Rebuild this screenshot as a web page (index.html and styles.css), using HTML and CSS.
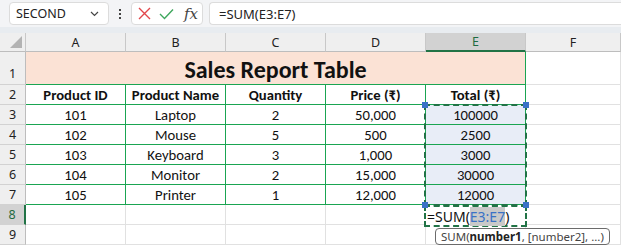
FILE: index.html
```html
<!DOCTYPE html>
<html lang="en">
<head>
    <meta charset="UTF-8">
    <title>Sales Report Table</title>
    <link rel="stylesheet" href="styles.css">
</head>
<body>

<div class="toolbar">
    <div class="name-box">
        <span>SECOND</span>
        <svg width="9" height="6" viewBox="0 0 9 6"><path d="M1 1 L4.5 4.5 L8 1" fill="none" stroke="#444" stroke-width="1.2"/></svg>
    </div>
    <div class="toolbar-dots"><i></i><i></i><i></i></div>
    <div class="fx-box">
        <svg width="13" height="13" viewBox="0 0 13 13"><path d="M1 1 L12 12 M12 1 L1 12" stroke="#e2474b" stroke-width="1.4" fill="none"/></svg>
        <svg width="15" height="12" viewBox="0 0 15 12"><path d="M1 6 L5.5 10.5 L14 1.5" stroke="#3ea75d" stroke-width="1.4" fill="none"/></svg>
        <span class="fx">fx</span>
    </div>
    <div class="formula-bar">=SUM(E3:E7)</div>
</div>
<div class="band"></div>

<div class="sheet">
    <!-- column headers -->
    <div class="corner"><span class="corner-tri"></span></div>
    <div class="col-head">A</div>
    <div class="col-head">B</div>
    <div class="col-head">C</div>
    <div class="col-head">D</div>
    <div class="col-head col-active">E</div>
    <div class="col-head">F</div>

    <!-- row 1 -->
    <div class="row-head row-tall">1</div>
    <div class="cell title">Sales Report Table</div>
    <div class="cell"></div>

    <!-- row 2 -->
    <div class="row-head">2</div>
    <div class="cell tbl th">Product ID</div>
    <div class="cell tbl th">Product Name</div>
    <div class="cell tbl th">Quantity</div>
    <div class="cell tbl th">Price (₹)</div>
    <div class="cell tbl th">Total (₹)</div>
    <div class="cell"></div>

    <!-- rows 3-7 -->
    <div class="row-head">3</div>
    <div class="cell tbl">101</div>
    <div class="cell tbl">Laptop</div>
    <div class="cell tbl">2</div>
    <div class="cell tbl">50,000</div>
    <div class="cell tbl sel range-start">100000
        <div class="range-box">
            <span class="handle h-tl"></span>
            <span class="handle h-tr"></span>
            <span class="handle h-bl"></span>
            <span class="handle h-br"></span>
        </div>
    </div>
    <div class="cell"></div>

    <div class="row-head">4</div>
    <div class="cell tbl">102</div>
    <div class="cell tbl">Mouse</div>
    <div class="cell tbl">5</div>
    <div class="cell tbl">500</div>
    <div class="cell tbl sel">2500</div>
    <div class="cell"></div>

    <div class="row-head">5</div>
    <div class="cell tbl">103</div>
    <div class="cell tbl">Keyboard</div>
    <div class="cell tbl">3</div>
    <div class="cell tbl">1,000</div>
    <div class="cell tbl sel">3000</div>
    <div class="cell"></div>

    <div class="row-head">6</div>
    <div class="cell tbl">104</div>
    <div class="cell tbl">Monitor</div>
    <div class="cell tbl">2</div>
    <div class="cell tbl">15,000</div>
    <div class="cell tbl sel">30000</div>
    <div class="cell"></div>

    <div class="row-head">7</div>
    <div class="cell tbl">105</div>
    <div class="cell tbl">Printer</div>
    <div class="cell tbl">1</div>
    <div class="cell tbl">12,000</div>
    <div class="cell tbl sel">12000</div>
    <div class="cell"></div>

    <!-- row 8 -->
    <div class="row-head row-active">8</div>
    <div class="cell"></div>
    <div class="cell"></div>
    <div class="cell"></div>
    <div class="cell"></div>
    <div class="edit-cell">=SUM(<span class="ref">E3:E7</span>)
        <div class="tip">SUM(<b>number1</b>, [number2], ...)</div>
    </div>
    <div class="cell"></div>

    <!-- row 9 -->
    <div class="row-head">9</div>
    <div class="cell"></div>
    <div class="cell"></div>
    <div class="cell"></div>
    <div class="cell"></div>
    <div class="cell"></div>
    <div class="cell"></div>
</div>

</body>
</html>
```

FILE: styles.css
```css
body {
    margin: 0;
    background: #fff;
    font-family: "Noto Sans", "Open Sans", sans-serif;
    overflow: hidden;
}

/* formula bar */
.toolbar {
    height: 27px;
    background: #f3f4f6;
    display: flex;
    align-items: center;
    padding: 0 0 0 9px;
    box-sizing: border-box;
}

.name-box {
    width: 100px;
    height: 23px;
    box-sizing: border-box;
    background: #fff;
    border: 1px solid #dcdcdc;
    border-radius: 4px;
    display: flex;
    align-items: center;
    justify-content: space-between;
    padding: 0 9px 0 6px;
    font-size: 12.5px;
    color: #222;
}

.toolbar-dots {
    width: 22px;
    display: flex;
    flex-direction: column;
    align-items: center;
    gap: 2px;
}

.toolbar-dots i {
    width: 2px;
    height: 2px;
    background: #444;
}

.fx-box {
    width: 72px;
    height: 23px;
    box-sizing: border-box;
    background: #fff;
    border: 1px solid #dcdcdc;
    border-radius: 4px;
    display: flex;
    align-items: center;
    gap: 8px;
    padding: 0 0 0 6px;
}

.fx {
    font-family: "DejaVu Serif", "Liberation Serif", serif;
    font-style: italic;
    font-size: 15px;
    color: #444;
    margin-left: 2px;
}

.formula-bar {
    flex: 1;
    height: 23px;
    box-sizing: border-box;
    margin-left: 6px;
    background: #fff;
    border: 1px solid #dcdcdc;
    border-right: none;
    border-radius: 4px 0 0 4px;
    display: flex;
    align-items: center;
    padding-left: 9px;
    font-size: 13px;
    color: #222;
}

.band {
    height: 6px;
    background: #e8ecf0;
}

/* grid */
.sheet {
    display: grid;
    grid-template-columns: 26px repeat(5, 100px) 1fr;
    grid-template-rows: 19px 33px repeat(8, 20px);
    font-family: "Carlito", "Lato", sans-serif;
    font-size: 14.7px;
    color: #111;
}

.corner,
.col-head,
.row-head,
.cell {
    box-sizing: border-box;
    border-right: 1px solid #e1e1e1;
    border-bottom: 1px solid #e1e1e1;
}

.corner {
    background: #efefef;
    border-right-color: #c8c8c8;
    border-bottom-color: #bdbdbd;
    display: flex;
    align-items: flex-end;
    justify-content: flex-end;
    padding: 0 3px 3px 0;
}

.corner-tri {
    width: 0;
    height: 0;
    border-left: 12px solid transparent;
    border-bottom: 12px solid #b3b3b3;
}

.col-head {
    background: #efefef;
    border-right-color: #c8c8c8;
    border-bottom-color: #bdbdbd;
    display: flex;
    align-items: center;
    justify-content: center;
    font-family: "Noto Sans", "Open Sans", sans-serif;
    font-size: 12.5px;
    color: #222;
}

.col-active {
    background: #d2d2d2;
    border-bottom: 2px solid #217346;
    color: #1e6b41;
}

.row-head {
    background: #efefef;
    border-right-color: #bdbdbd;
    border-bottom-color: #d2d2d2;
    display: flex;
    align-items: flex-end;
    justify-content: center;
    padding-bottom: 1px;
    font-family: "Noto Sans", "Open Sans", sans-serif;
    font-size: 12.5px;
    color: #222;
}

.row-tall {
    padding-bottom: 2px;
}

.row-active {
    background: #d2d2d2;
    border-right: 2px solid #217346;
    color: #1e6b41;
}

.cell {
    display: flex;
    align-items: flex-end;
    justify-content: center;
    padding-bottom: 0;
    white-space: nowrap;
}

.title {
    grid-column: span 5;
    background: #fbe2d5;
    border-right-color: #1aa552;
    border-bottom-color: #1aa552;
    font-size: 24px;
    font-weight: bold;
    align-items: center;
    padding: 2px 0 0;
}

.tbl {
    border-right-color: #1aa552;
    border-bottom-color: #1aa552;
}

.th {
    font-weight: bold;
}

.sel {
    background: #e8edf7;
}

.range-start {
    position: relative;
}

/* reference range outline, drawn over E3:E7 */
.range-box {
    position: absolute;
    left: -2px;
    top: -1px;
    width: 103px;
    height: 102px;
    box-sizing: border-box;
    border: 2px dashed #217346;
    pointer-events: none;
    z-index: 2;
}

.handle {
    position: absolute;
    width: 6px;
    height: 6px;
    background: #3a72c6;
}

.h-tl { left: -4px; top: -4px; }
.h-tr { right: -4px; top: -4px; }
.h-bl { left: -4px; bottom: -4px; }
.h-br { right: -4px; bottom: -4px; }

.edit-cell {
    margin: 0 -1px -2px -2px;
    border: 2px dashed #217346;
    background: #fff;
    position: relative;
    z-index: 1;
    display: flex;
    align-items: center;
    padding-left: 1px;
    font-family: "Noto Sans", "Open Sans", sans-serif;
    font-size: 14px;
    color: #111;
    white-space: nowrap;
}

.ref {
    background: #c9c9c9;
    color: #3a72c6;
}

.tip {
    position: absolute;
    left: 9px;
    top: 21px;
    height: 17px;
    box-sizing: border-box;
    border: 1px solid #6b6b6b;
    border-radius: 4px;
    background: #fff;
    padding: 0 5px;
    font-size: 11.5px;
    line-height: 15px;
    color: #444;
    white-space: nowrap;
}

.tip b {
    color: #222;
}
```
